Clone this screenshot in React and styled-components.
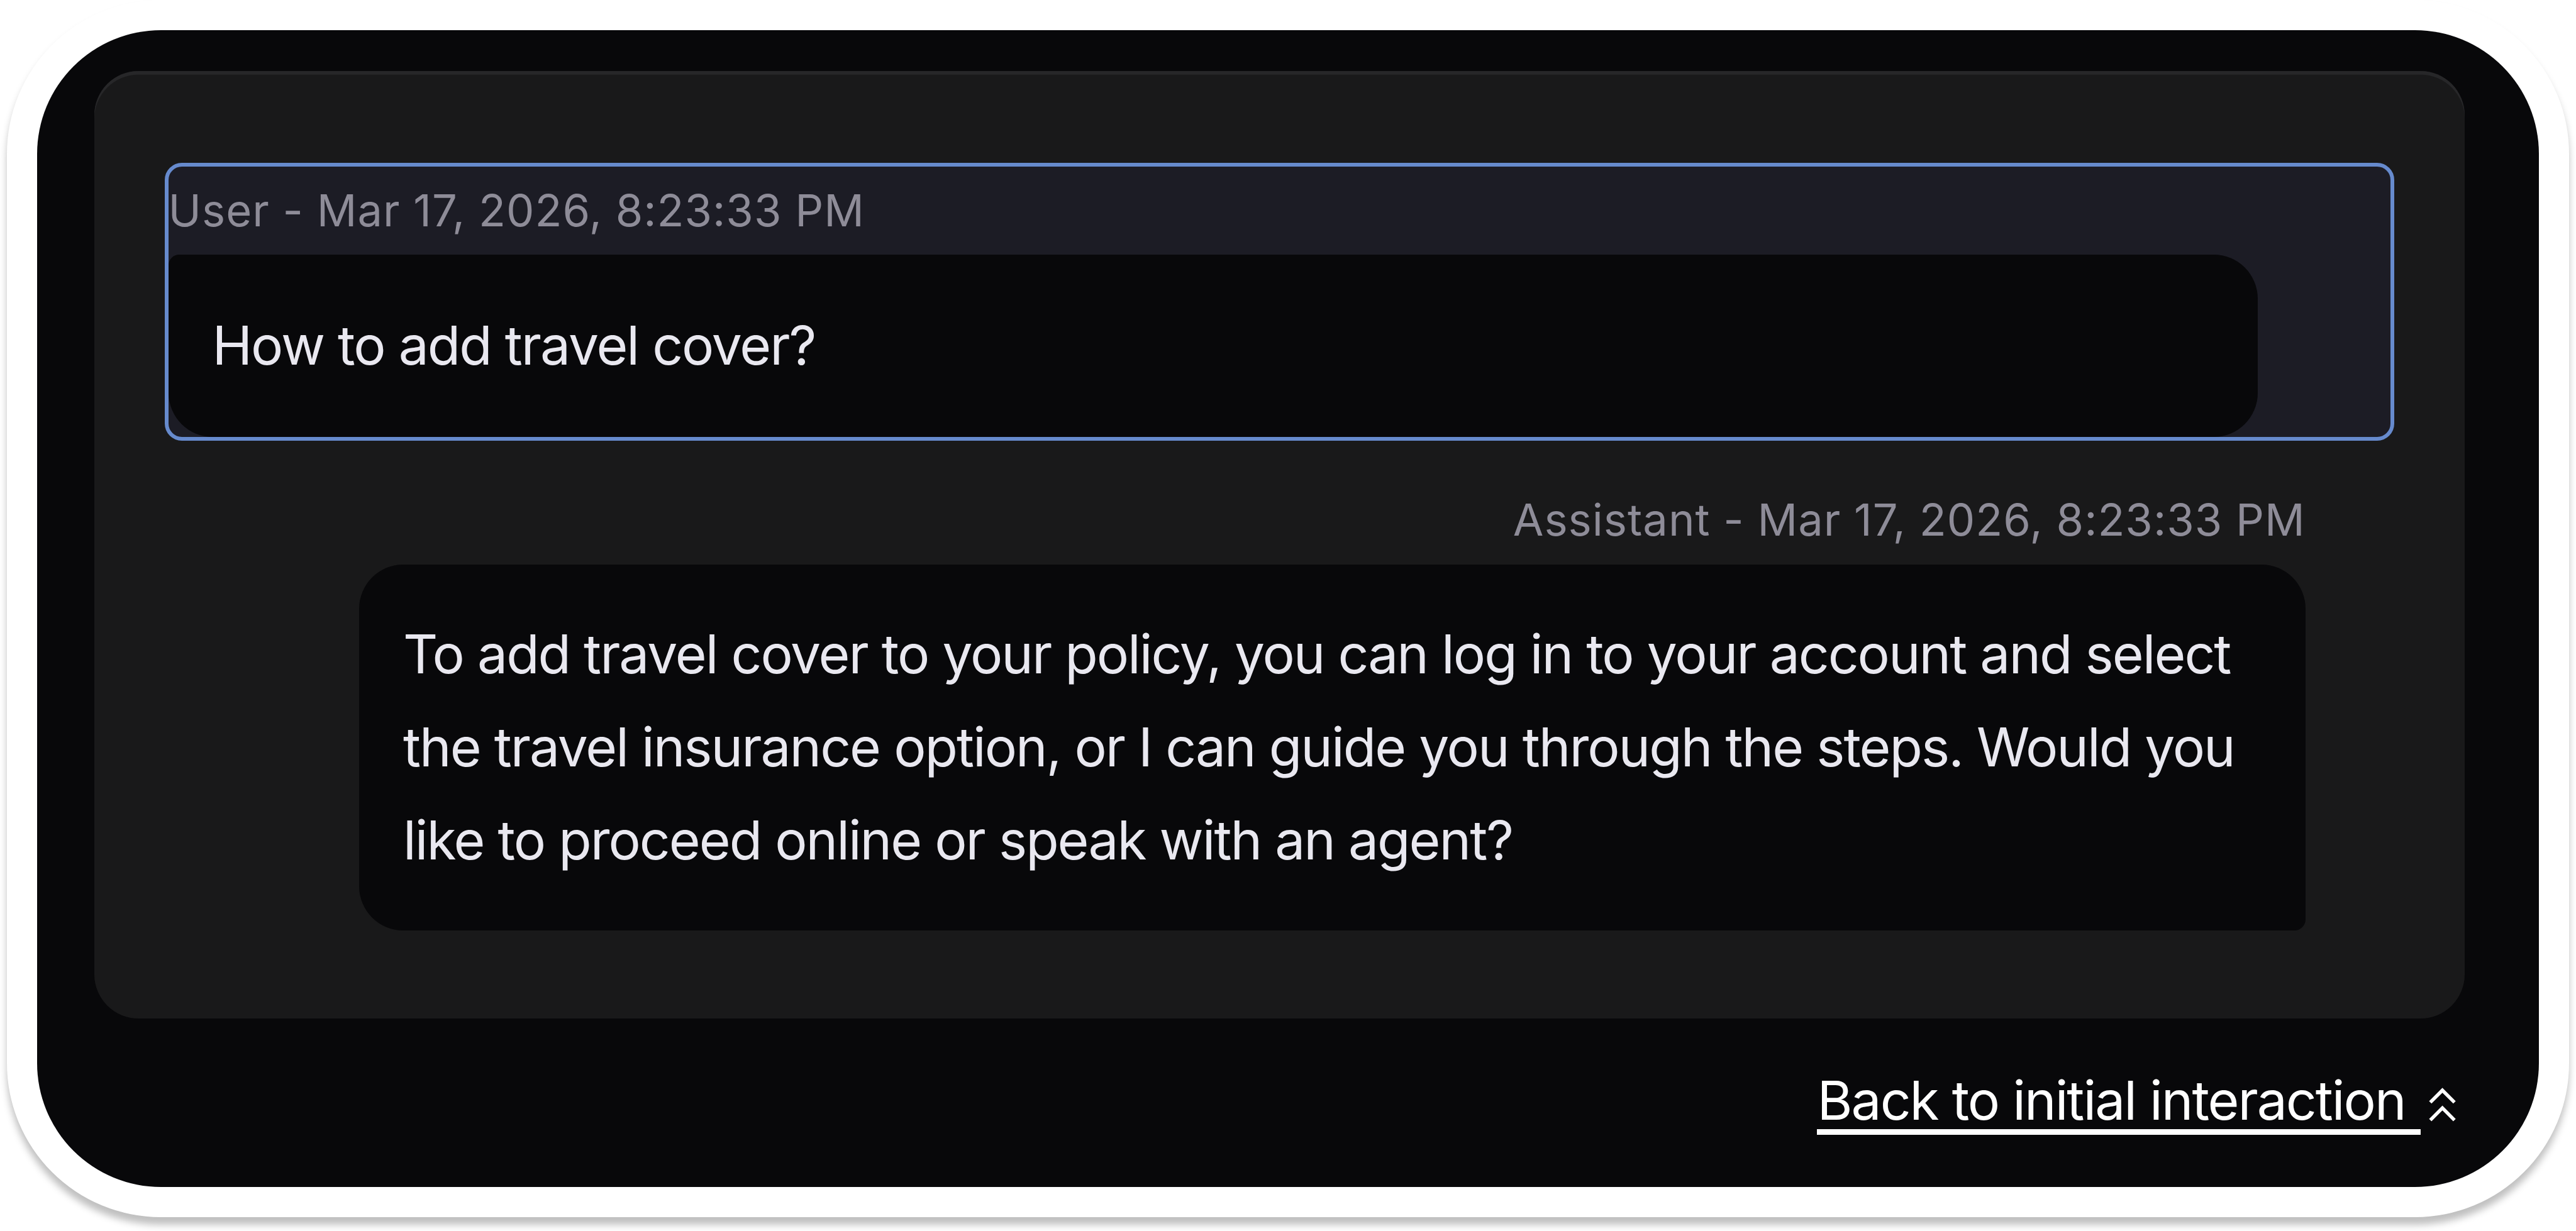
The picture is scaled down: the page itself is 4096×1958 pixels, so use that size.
import React from "react";
import styled, { createGlobalStyle, css } from "styled-components";

const u = (n) => `${(n * 4096) / 4368}px`;

const GlobalStyle = createGlobalStyle`
  *, *::before, *::after { box-sizing: border-box; }
  html, body { margin: 0; background: #ffffff; }
  body { overflow: hidden; font-family: Inter, "Liberation Sans", sans-serif; font-optical-sizing: none; }
`;

const Stage = styled.main`
  width: 100vw;
  height: 100vh;
  padding: 0 ${u(12)} ${u(24)};
  background: #ffffff;
`;

const Frame = styled.section`
  display: flex;
  flex-direction: column;
  height: 100%;
  padding: ${u(51)};
  border-radius: ${u(261)};
  background: #ffffff;
  box-shadow: 0 ${u(12)} ${u(12)} rgba(0, 0, 0, 0.25);
`;

const Screen = styled.div`
  display: flex;
  flex: 1;
  flex-direction: column;
  padding: ${u(69)} ${u(125.5)} 0 ${u(96.5)};
  border-radius: ${u(210)};
  background: #08080a;
`;

const Transcript = styled.div`
  display: flex;
  flex-direction: column;
  height: ${u(1608)};
  padding: ${u(156)} ${u(119.5)} 0;
  border-radius: ${u(75)};
  background: #19191a;
  box-shadow: inset 0 ${u(6)} 0 #272729;
`;

const Entry = styled.article`
  display: flex;
  flex-direction: column;
  ${(p) =>
    p.$selected &&
    css`
      height: ${u(471.5)};
      border: ${u(6.4)} solid #668acd;
      border-radius: ${u(29)};
      background: #1c1c25;
      overflow: hidden;
    `}
  ${(p) =>
    p.$reply &&
    css`
      align-items: flex-end;
      margin-top: ${u(60)};
      padding-right: ${u(151)};
    `}
`;

const Meta = styled.div`
  display: flex;
  align-items: center;
  height: ${u(150)};
  font-size: ${u(75.2)};
  line-height: 1;
  letter-spacing: ${u(1.03)};
  white-space: pre;
  color: #8e8c98;
`;

const Bubble = styled.div`
  display: flex;
  flex-direction: column;
  justify-content: center;
  width: ${(p) => u(p.$reply ? 3300 : 3543)};
  height: ${(p) => u(p.$reply ? 621 : 309)};
  padding-left: ${u(74.5)};
  border-radius: ${(p) =>
    p.$reply
      ? `${u(75)} ${u(75)} ${u(19)} ${u(75)}`
      : `${u(18)} ${u(75)} ${u(75)} ${u(75)}`};
  background: #08080a;
  color: #e9e8f0;
  font-size: ${u(91.4)};
  line-height: ${u(157.6)};
  letter-spacing: ${u(-2.15)};
`;

const TextLine = styled.span`
  display: block;
  white-space: pre;
`;

const Footer = styled.footer`
  display: flex;
  align-items: center;
  justify-content: flex-end;
  padding: ${u(81)} ${u(15)} 0 0;
  color: #ffffff;
`;

const BackLink = styled.a`
  display: block;
  height: ${u(116)};
  padding-right: ${u(2.5)};
  border-bottom: ${u(10)} solid #ffffff;
  font-size: ${u(91.4)};
  line-height: ${u(116)};
  letter-spacing: ${u(-2.15)};
  white-space: pre;
`;

const Chevrons = styled.svg`
  display: block;
  width: ${u(46)};
  height: ${u(57)};
  margin: ${u(13)} 0 0 ${u(14)};
  fill: none;
  stroke: currentColor;
  stroke-width: 5.8;
`;

const conversation = [
  {
    author: "User",
    time: "Mar 17, 2026, 8:23:33 PM",
    selected: true,
    lines: ["How to add travel cover?"],
  },
  {
    author: "Assistant",
    time: "Mar 17, 2026, 8:23:33 PM",
    reply: true,
    lines: [
      "To add travel cover to your policy, you can log in to your account and select",
      "the travel insurance option, or I can guide you through the steps. Would you",
      "like to proceed online or speak with an agent?",
    ],
  },
];

export default function App() {
  return (
    <Stage>
      <GlobalStyle />
      <Frame>
        <Screen>
          <Transcript>
            {conversation.map((m) => (
              <Entry key={m.author} $selected={m.selected} $reply={m.reply}>
                <Meta>{`${m.author} - ${m.time}`}</Meta>
                <Bubble $reply={m.reply}>
                  {m.lines.map((line) => (
                    <TextLine key={line}>{line}</TextLine>
                  ))}
                </Bubble>
              </Entry>
            ))}
          </Transcript>
          <Footer>
            <BackLink>{"Back to initial interaction "}</BackLink>
            <Chevrons viewBox="0 0 46 57">
              <path d="M2.5 25 L23 4.5 L43.5 25 M2.5 55 L23 34.5 L43.5 55" />
            </Chevrons>
          </Footer>
        </Screen>
      </Frame>
    </Stage>
  );
}
